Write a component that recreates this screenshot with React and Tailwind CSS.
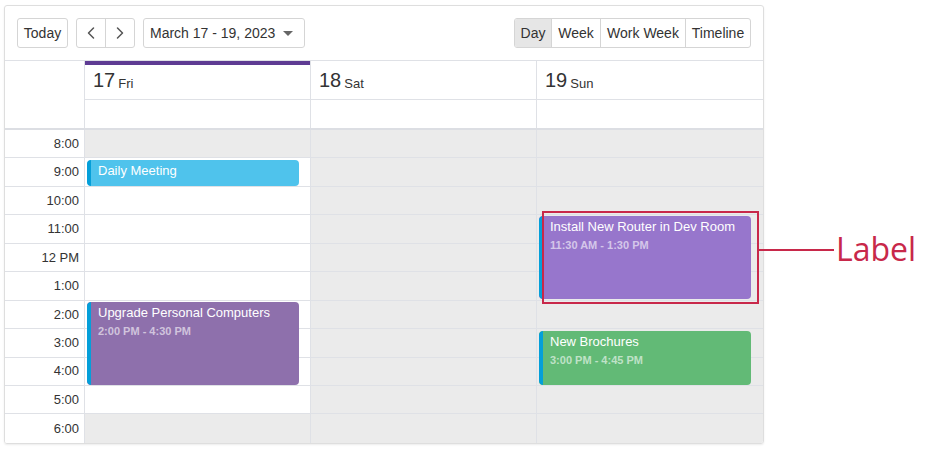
import { ChevronLeft, ChevronRight } from 'lucide-react';

const HOURS = ['8:00', '9:00', '10:00', '11:00', '12 PM', '1:00', '2:00', '3:00', '4:00', '5:00', '6:00'];

const DAYS = [
  { num: '17', name: 'Fri', current: true, work: [1, 9] },
  { num: '18', name: 'Sat' },
  { num: '19', name: 'Sun' },
];

// top / height measured from the first time row
const EVENTS = {
  0: [
    { title: 'Daily Meeting', top: 30, h: 26, bg: 'bg-[#4fc3ec]' },
    { title: 'Upgrade Personal Computers', time: '2:00 PM - 4:30 PM', top: 172, h: 83, bg: 'bg-[#8e70ac]' },
  ],
  2: [
    { title: 'Install New Router in Dev Room', time: '11:30 AM - 1:30 PM', top: 86, h: 83, bg: 'bg-[#9776cc]' },
    { title: 'New Brochures', time: '3:00 PM - 4:45 PM', top: 201, h: 54, bg: 'bg-[#62ba76]' },
  ],
};

function Btn({ children, className = '' }) {
  return (
    <button className={`h-[30px] px-[6px] text-[14px] text-[#333] flex items-center ${className}`}>{children}</button>
  );
}

function Event({ ev }) {
  return (
    <div
      className={`absolute left-[2px] w-[212px] rounded-[4px] overflow-hidden flex ${ev.bg}`}
      style={{ top: ev.top, height: ev.h }}
    >
      <div className="w-[4px] bg-[#049fd9] rounded-l-[4px] shrink-0" />
      <div className="pl-[7px] pt-[2px]">
        <div className="text-white text-[13px] leading-[18px]">{ev.title}</div>
        {ev.time && <div className="text-white/60 text-[11px] font-bold leading-[18px]">{ev.time}</div>}
      </div>
    </div>
  );
}

export default function App() {
  return (
    <div className="relative w-[950px] h-[449px] bg-white font-['Liberation_Sans',Arial,sans-serif] text-[#333]">
      <div className="absolute left-[4px] top-[5px] w-[760px] border border-[#dedede] rounded-[3px] shadow-[0_1px_2px_rgba(0,0,0,0.08)] overflow-hidden">
        {/* toolbar */}
        <div className="h-[55px] border-b border-[#dfe1e6] flex items-center px-[12px]">
          <Btn className="border border-[#d5d5d5] rounded-[3px] w-[51px] justify-center">Today</Btn>
          <div className="ml-[8px] flex border border-[#d5d5d5] rounded-[3px]">
            <button className="w-[29px] h-[28px] flex items-center justify-center border-r border-[#d5d5d5]">
              <ChevronLeft size={20} strokeWidth={1.8} className="text-[#555]" />
            </button>
            <button className="w-[28px] h-[28px] flex items-center justify-center">
              <ChevronRight size={20} strokeWidth={1.8} className="text-[#555]" />
            </button>
          </div>
          <Btn className="ml-[8px] w-[162px] border border-[#d5d5d5] rounded-[3px] justify-between">
            <span>March 17 - 19, 2023</span>
            <span className="mr-[5px] w-0 h-0 border-l-[5px] border-r-[5px] border-t-[5px] border-l-transparent border-r-transparent border-t-[#666]" />
          </Btn>
          <div className="ml-auto flex border border-[#d5d5d5] rounded-[3px] overflow-hidden">
            <button className="h-[28px] w-[37px] bg-[#e6e6e6] text-[14px] border-r border-[#d5d5d5]">Day</button>
            <button className="h-[28px] w-[49px] text-[14px] border-r border-[#d5d5d5]">Week</button>
            <button className="h-[28px] w-[85px] text-[14px] border-r border-[#d5d5d5]">Work Week</button>
            <button className="h-[28px] w-[64px] text-[14px]">Timeline</button>
          </div>
        </div>

        {/* day headers */}
        <div className="flex border-b-2 border-[#dcdee3]">
          <div className="w-[80px] border-r border-[#dfe1e6] h-[67px]" />
          {DAYS.map((d, i) => (
            <div key={d.num} className={`w-[226px] ${i < 2 ? 'border-r border-[#dfe1e6]' : ''}`}>
              <div className={`h-[39px] border-b border-[#dfe1e6] px-[8px] flex items-end pb-[9px] ${d.current ? 'border-t-4 border-t-[#5e3b93]' : ''}`}>
                <span className="text-[20px] leading-none">{d.num}</span>
                <span className="text-[13px] ml-[3px] leading-none">{d.name}</span>
              </div>
              <div className="h-[28px]" />
            </div>
          ))}
        </div>

        {/* time grid */}
        <div className="flex">
          <div className="w-[80px] border-r border-[#dfe1e6] bg-white">
            {HOURS.map((h, i) => (
              <div key={h} className={`h-[28.45px] flex items-center justify-end pr-[5px] text-[13px] ${i < HOURS.length - 1 ? 'border-b border-[#dfe1e6]' : ''}`}>
                {h}
              </div>
            ))}
          </div>
          {DAYS.map((d, di) => (
            <div key={d.num} className={`w-[226px] relative ${di < 2 ? 'border-r border-[#dfe1e6]' : ''}`}>
              {HOURS.map((h, i) => {
                const work = d.work && i >= d.work[0] && i <= d.work[1];
                return (
                  <div
                    key={h}
                    className={`h-[28.45px] ${work ? 'bg-white' : 'bg-[#ebebeb]'} ${i < HOURS.length - 1 ? 'border-b border-[#dfe1e6]' : ''}`}
                  />
                );
              })}
              {(EVENTS[di] || []).map(ev => <Event key={ev.title} ev={ev} />)}
            </div>
          ))}
        </div>
      </div>

      {/* annotation */}
      <div className="absolute left-[542px] top-[211px] w-[217px] h-[93px] border-2 border-[#c8284a]" />
      <div className="absolute left-[759px] top-[249px] w-[75px] h-[2px] bg-[#c8284a]" />
      <div className="absolute left-[836px] top-[229px] text-[32px] leading-[40px] text-[#c8284a] font-['Open_Sans',sans-serif]">Label</div>
    </div>
  );
}
